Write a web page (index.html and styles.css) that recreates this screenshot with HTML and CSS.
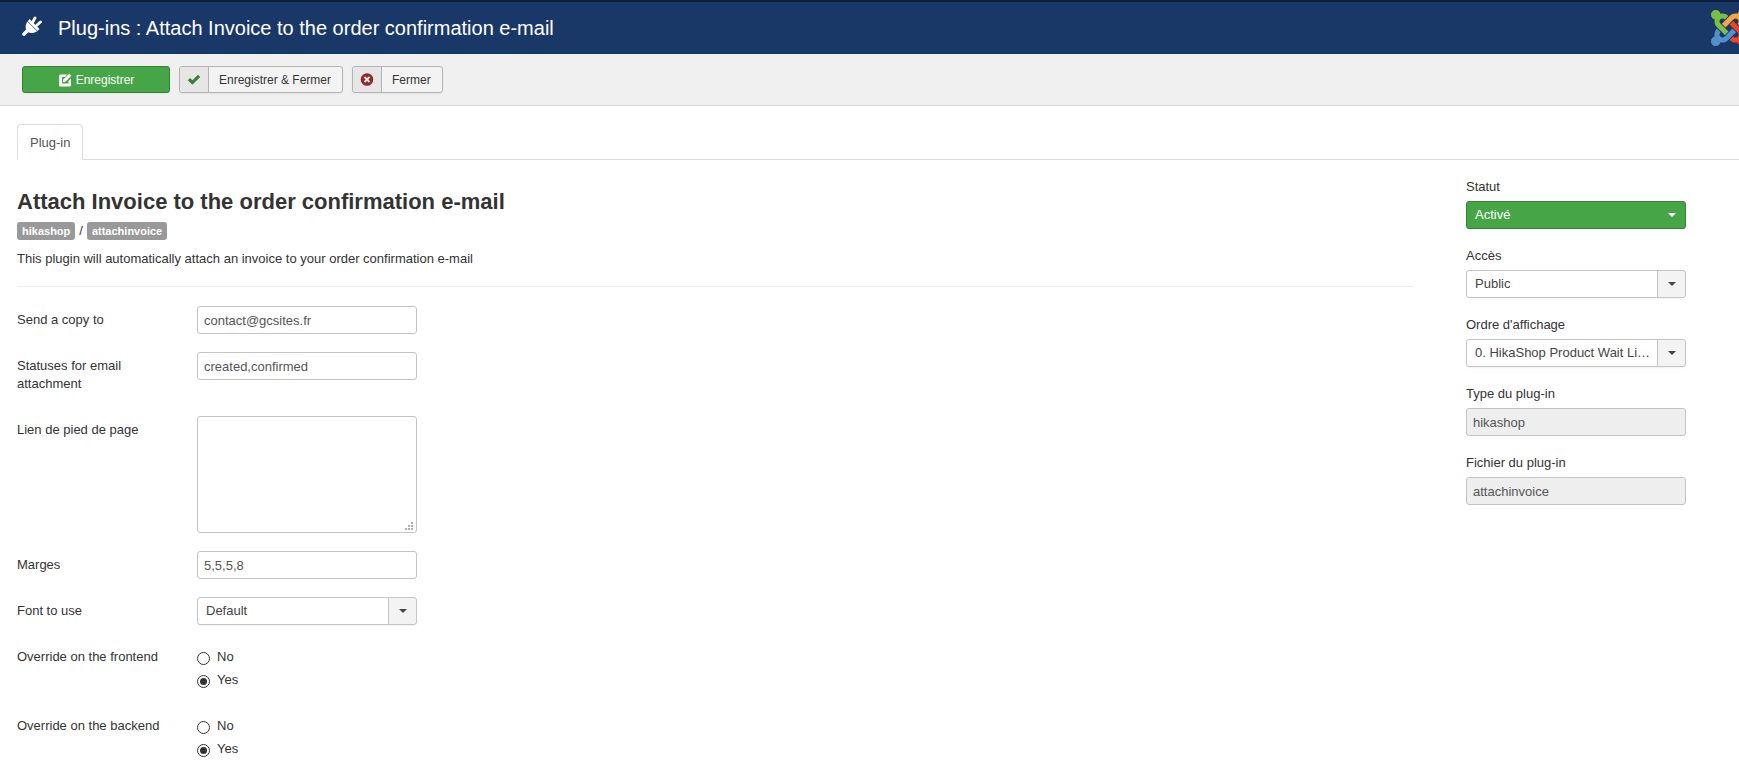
FILE: index.html
```html
<!DOCTYPE html>
<html lang="fr">
<head>
    <meta charset="UTF-8">
    <meta name="viewport" content="width=device-width, initial-scale=1.0">
    <title>Plug-ins : Attach Invoice to the order confirmation e-mail</title>
    <link rel="stylesheet" href="styles.css">
</head>
<body>
    <header class="header">
        <svg class="icon-plug" viewBox="0 0 20 24" fill="#ffffff">
            <path d="M7.500 3 17.500 13 15.500 14.900 5.800 5.200Z"/>
            <path d="M5.400 5.500 15.100 15.200C12.500 17 8.500 17.700 5.800 15.900 2.800 13.300 3.200 8.800 5.400 5.500Z"/>
            <path d="M10.500 6.500 13 2M14 10 18.500 6" stroke="#ffffff" stroke-width="2.800" stroke-linecap="round"/>
            <path d="M5.500 14.500 1.900 18.200" stroke="#ffffff" stroke-width="3.400" stroke-linecap="round"/>
        </svg>
        <h1 class="page-title">Plug-ins : Attach Invoice to the order confirmation e-mail</h1>
        <svg class="logo" viewBox="0 0 24 24">
            <defs>
                <path id="arm" d="M16.719 14.759L14.22 17.26l-2.37 2.37-.462.466c-1.368 1.365-3.297 1.83-5.047 1.397-.327 1.424-1.604 2.49-3.13 2.49C1.438 23.983 0 22.547 0 20.772c0-1.518 1.055-2.789 2.469-3.123-.446-1.76.016-3.705 1.396-5.08l.179-.18 2.37 2.37-.184.181c-.769.779-.769 2.024 0 2.789.771.78 2.022.78 2.787 0l.465-.465 2.367-2.371 2.502-2.506z"/>
            </defs>
            <use href="#arm" fill="#5091cd"/>
            <use href="#arm" fill="#f44321" transform="rotate(270 12 12)"/>
            <use href="#arm" fill="#f9a541" transform="rotate(180 12 12)"/>
            <use href="#arm" fill="#7ac143" transform="rotate(90 12 12)"/>
        </svg>
    </header>

    <div class="toolbar">
        <button type="button" class="btn btn-success">
            <svg class="icon" viewBox="0 0 14 14">
                <path fill="#ffffff" d="M2.500 1.500H9L7 4H4V10.500H10.500V8L13 5.500V12Q13 13.500 11.500 13.500H2.500Q1 13.500 1 12V3Q1 1.500 2.500 1.500Z"/>
                <path fill="#ffffff" d="M11.300.6 13.400 2.700 7.700 8.400 4.700 9.300 5.600 6.300Z"/>
            </svg>
            Enregistrer
        </button>
        <button type="button" class="btn btn-split">
            <span class="btn-icon">
                <svg class="icon" viewBox="0 0 14 14"><path fill="#378137" d="M0.800 7.200 3 5 5.400 7.300 11 1.700 13.200 3.900 5.400 11.800Z"/></svg>
            </span>
            <span class="btn-text">Enregistrer &amp; Fermer</span>
        </button>
        <button type="button" class="btn btn-split">
            <span class="btn-icon">
                <svg class="icon" viewBox="0 0 14 14"><circle cx="7" cy="6.500" r="6.300" fill="#942a25"/><path stroke="#eeeeee" stroke-width="1.800" d="M4.500 4 9.500 9M9.500 4 4.500 9"/></svg>
            </span>
            <span class="btn-text">Fermer</span>
        </button>
    </div>

    <nav class="tabs">
        <a href="#general" class="tab">Plug-in</a>
    </nav>

    <form class="content" id="general">
        <div class="main">
            <h2 class="plugin-name">Attach Invoice to the order confirmation e-mail</h2>
            <div class="badges">
                <span class="badge">hikashop</span>
                /
                <span class="badge">attachinvoice</span>
            </div>
            <p class="description">This plugin will automatically attach an invoice to your order confirmation e-mail</p>
            <hr class="divider">

            <div class="row">
                <label class="row-label" for="copy">Send a copy to</label>
                <input type="text" class="field" id="copy" value="contact@gcsites.fr">
            </div>
            <div class="row">
                <label class="row-label" for="statuses">Statuses for email attachment</label>
                <input type="text" class="field" id="statuses" value="created,confirmed">
            </div>
            <div class="row">
                <label class="row-label" for="footer">Lien de pied de page</label>
                <div class="textarea-box">
                    <textarea class="field textarea" id="footer"></textarea>
                    <svg class="grip" viewBox="0 0 8 8" fill="#b0b0b0"><path d="M6 0h2v2H6zM3 3h2v2H3zM6 3h2v2H6zM0 6h2v2H0zM3 6h2v2H3zM6 6h2v2H6z"/></svg>
                </div>
            </div>
            <div class="row">
                <label class="row-label" for="margins">Marges</label>
                <input type="text" class="field" id="margins" value="5,5,5,8">
            </div>
            <div class="row">
                <label class="row-label" for="font">Font to use</label>
                <div class="select-box">
                    <select class="select" id="font"><option>Default</option></select>
                </div>
            </div>
            <div class="row" role="radiogroup" aria-labelledby="frontend-label">
                <span class="row-label" id="frontend-label">Override on the frontend</span>
                <div class="radios">
                    <label class="radio"><input type="radio" name="frontend"> No</label>
                    <label class="radio"><input type="radio" name="frontend" checked> Yes</label>
                </div>
            </div>
            <div class="row" role="radiogroup" aria-labelledby="backend-label">
                <span class="row-label" id="backend-label">Override on the backend</span>
                <div class="radios">
                    <label class="radio"><input type="radio" name="backend"> No</label>
                    <label class="radio"><input type="radio" name="backend" checked> Yes</label>
                </div>
            </div>
        </div>

        <aside class="sidebar">
            <div class="group">
                <label for="status">Statut</label>
                <div class="select-box select-success">
                    <select class="select" id="status"><option>Activé</option></select>
                </div>
            </div>
            <div class="group">
                <label for="access">Accès</label>
                <div class="select-box">
                    <select class="select" id="access"><option>Public</option></select>
                </div>
            </div>
            <div class="group">
                <label for="order">Ordre d'affichage</label>
                <div class="select-box">
                    <select class="select" id="order"><option>0. HikaShop Product Wait List Notification</option></select>
                </div>
            </div>
            <div class="group">
                <label for="type">Type du plug-in</label>
                <input type="text" class="field" id="type" value="hikashop" readonly>
            </div>
            <div class="group">
                <label for="file">Fichier du plug-in</label>
                <input type="text" class="field" id="file" value="attachinvoice" readonly>
            </div>
        </aside>
    </form>
</body>
</html>
```
FILE: styles.css
```css
* {
    box-sizing: border-box;
}
body {
    margin: 0;
    font-family: "Liberation Sans", Arial, sans-serif;
    font-size: 13px;
    line-height: 18px;
    color: #333333;
    background: #ffffff;
    overflow-x: hidden;
}
input, select, textarea, button {
    font-family: inherit;
    font-size: 13px;
    line-height: 18px;
}

/* Header */
.header {
    display: flex;
    align-items: center;
    height: 54px;
    padding-left: 22px;
    border-top: 2px solid #0d1f3d;
    background: #1a3867;
    overflow: hidden;
}
.icon-plug {
    width: 20px;
    height: 24px;
    margin-right: 16px;
}
.page-title {
    flex: 1;
    margin: 0;
    font-size: 20px;
    font-weight: normal;
    line-height: 36px;
    color: #ffffff;
}
.logo {
    flex: none;
    width: 36px;
    height: 36px;
    margin-right: -8px;
}

/* Toolbar */
.toolbar {
    display: flex;
    gap: 9px;
    padding: 12px 22px;
    border-bottom: 1px solid #d8d8d8;
    background: #f0f0f0;
}
.btn {
    display: flex;
    align-items: center;
    justify-content: center;
    height: 27px;
    padding: 0;
    border: 1px solid #b3b3b3;
    border-radius: 3px;
    font-size: 12px;
    color: #333333;
    background: #f3f3f3;
    box-shadow: 0 1px 2px rgba(0, 0, 0, 0.05);
    cursor: pointer;
}
.btn-success {
    gap: 4px;
    width: 148px;
    border-color: #368136;
    color: #ffffff;
    background: #46a546;
}
.btn-icon {
    display: flex;
    align-items: center;
    justify-content: center;
    width: 29px;
    height: 25px;
    border-right: 1px solid #b3b3b3;
    border-radius: 3px 0 0 3px;
    background: #e6e6e6;
}
.btn-text {
    padding: 0 11px 0 10px;
}
.icon {
    width: 14px;
    height: 14px;
}

/* Tabs */
.tabs {
    display: flex;
    margin: 18px 0 18px 17px;
    border-bottom: 1px solid #dddddd;
}
.tab {
    margin-bottom: -1px;
    padding: 9px 12px 7px;
    border: 1px solid #dddddd;
    border-bottom-color: #ffffff;
    border-radius: 4px 4px 0 0;
    color: #555555;
    background: #ffffff;
    text-decoration: none;
}

/* Content */
.content {
    display: flex;
    gap: 52px;
    padding: 0 53px 0 17px;
}
.main {
    flex: 1;
}
.plugin-name {
    margin: 0;
    padding-top: 6px;
    font-size: 22px;
    line-height: 36px;
}
.badges {
    display: flex;
    align-items: center;
    gap: 4px;
    height: 22px;
}
.badge {
    padding: 2px 5px;
    border-radius: 3px;
    font-size: 11px;
    font-weight: bold;
    line-height: 14px;
    color: #ffffff;
    background: #999999;
}
.description {
    margin: 8px 0 18px;
}
.divider {
    margin: 0 0 18px;
    border: 0;
    border-top: 1px solid #eeeeee;
    border-bottom: 1px solid #ffffff;
}
.row {
    display: flex;
    align-items: flex-start;
    margin-bottom: 18px;
}
.row-label {
    flex: none;
    width: 180px;
    padding: 5px 20px 5px 0;
}
.field, .select {
    display: block;
    width: 220px;
    height: 28px;
    padding: 0 6px;
    border: 1px solid #c4c4c4;
    border-radius: 3px;
    color: #555555;
    background: #ffffff;
}
.field[readonly] {
    background: #eeeeee;
}
.textarea-box, .select-box {
    position: relative;
}
.textarea {
    height: 117px;
    padding: 4px 6px;
    resize: none;
}
.grip {
    position: absolute;
    right: 4px;
    bottom: 3px;
    width: 8px;
    height: 8px;
    pointer-events: none;
}
.select {
    padding: 0 32px 0 8px;
    color: #444444;
    background: linear-gradient(to left, #f3f3f3 27px, #c4c4c4 27px, #c4c4c4 28px, #ffffff 28px);
    box-shadow: 0 1px 2px rgba(0, 0, 0, 0.05);
    text-overflow: ellipsis;
    appearance: none;
}
.select-box::after {
    content: "";
    position: absolute;
    top: 12px;
    right: 10px;
    border: 4px solid transparent;
    border-top-color: #444444;
    border-bottom: 0;
    pointer-events: none;
}
.select-success .select {
    border-color: #368136;
    color: #ffffff;
    background: #46a546;
}
.select-success::after {
    border-top-color: #ffffff;
}
.radios {
    padding-top: 5px;
}
.radio {
    display: flex;
    gap: 7px;
    margin-bottom: 5px;
}
.radio input {
    display: grid;
    place-items: center;
    width: 13px;
    height: 13px;
    margin: 4px 0 0;
    border: 1px solid #333333;
    border-radius: 50%;
    background: #ffffff;
    appearance: none;
}
.radio input:checked::before {
    content: "";
    width: 7px;
    height: 7px;
    border-radius: 50%;
    background: #333333;
}

/* Sidebar */
.sidebar {
    flex: none;
    width: 220px;
}
.group {
    margin-bottom: 18px;
}
.group label {
    display: block;
    margin-bottom: 5px;
}

@media (max-width: 768px) {
    .content {
        flex-direction: column;
        gap: 18px;
        padding: 0 17px;
    }
}
```
